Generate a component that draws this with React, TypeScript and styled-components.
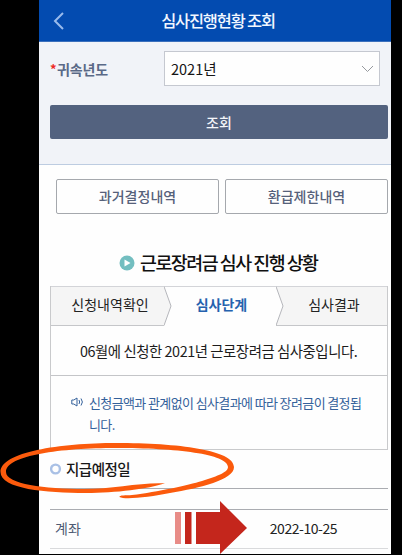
import React from "react";
import styled, { createGlobalStyle, css } from "styled-components";

const GlobalStyle = createGlobalStyle`
  * { box-sizing: border-box; }
  body {
    margin: 0;
    background: #000;
    overflow: hidden;
    font-family: "Noto Sans CJK KR", "Noto Sans", sans-serif;
  }
  button { font-family: inherit; padding: 0; margin: 0; }
`;

const Stage = styled.div`
  position: relative;
  width: 402px;
  height: 555px;
  padding-left: 39px;
  background: #000;
`;

const Phone = styled.main`
  width: 352px;
  height: 554px;
  overflow: hidden;
  background: #fefefe;
`;

const Header = styled.header`
  display: grid;
  grid-template-columns: 40px 1fr 34px;
  align-items: center;
  height: 42px;
  padding-bottom: 2px;
  background: #034bb0;
  border-bottom: 1px solid #3c70bc;
`;

const BackButton = styled.button`
  display: flex;
  padding: 2px 0 0 14px;
  border: 0;
  background: none;
`;

const HeaderTitle = styled.h1`
  margin: 0;
  text-align: center;
  color: #f2f7ff;
  font-size: 16.4px;
  font-weight: 500;
  line-height: 24px;
  letter-spacing: -1.2px;
`;

const SearchForm = styled.section`
  height: 123px;
  padding: 9px 3px 0 11px;
  background: #f1f3f8;
  border-bottom: 1px solid #bdcce1;
`;

const Field = styled.div`
  display: flex;
  align-items: center;
  height: 35px;
`;

const Label = styled.label`
  width: 114px;
  display: flex;
  gap: 2px;
  color: #5a6987;
  font-size: 14px;
  font-weight: 700;
  line-height: 20px;
  letter-spacing: -0.1px;
`;

const Required = styled.span`
  width: 5px;
  color: #ee2a24;
  font-size: 13px;
`;

const Select = styled.div`
  display: flex;
  align-items: center;
  justify-content: space-between;
  width: 216px;
  height: 35px;
  padding: 0 5px 0 6px;
  border: 1px solid #c5c8d0;
  background: #fefefe;
  color: #151515;
  font-size: 14.5px;
  line-height: 20px;
`;

const SubmitButton = styled.button`
  display: block;
  width: 338px;
  height: 34px;
  margin-top: 19px;
  border: 0;
  border-radius: 2px;
  background: #53627f;
  color: #f4f6fa;
  font-size: 14px;
  font-weight: 500;
`;

const HistoryButtons = styled.div`
  display: grid;
  grid-template-columns: 1fr 1fr;
  gap: 6px;
  padding: 14px 3px 0 17px;
`;

const OutlineButton = styled.button`
  height: 35px;
  padding-bottom: 1px;
  border: 1px solid #a5a8ad;
  border-radius: 2px;
  background: #fefefe;
  color: #56617a;
  font-size: 14px;
  font-weight: 500;
`;

const SectionTitle = styled.h2`
  display: flex;
  align-items: center;
  gap: 5px;
  height: 27px;
  margin: 35px 0 0 80px;
  color: #101010;
  font-size: 18.4px;
  font-weight: 500;
  letter-spacing: -1.5px;
  line-height: 24px;
  white-space: nowrap;
  svg { letter-spacing: 0; }
`;

const TitleText = styled.span`
  position: relative;
  padding-bottom: 2px;
`;

const Progress = styled.section`
  width: 338px;
  height: 164px;
  margin: 10px 0 0 11px;
  border: 1px solid #c9cacc;
  border-top: 0;
`;

const Steps = styled.div`
  display: grid;
  grid-template-columns: 113px 112px 111px;
  height: 40px;
  border-top: 1px solid #d3d4d8;
`;

const Step = styled.div<{ $active?: boolean }>`
  display: flex;
  position: relative;
  align-items: center;
  justify-content: center;
  padding-bottom: 4px;
  border-bottom: 1px solid #c5c6c9;
  background: #f5f5f5;
  color: #222;
  font-size: 14px;
  line-height: 20px;
  &:first-child { padding-left: 5px; }
  &:last-child { padding-left: 5px; }
  ${({ $active }) =>
    $active &&
    css`
      border-bottom-color: transparent;
      background: #fefefe;
      color: #2562ae;
      font-weight: 700;
      padding-left: 3px;
    `}
`;

const StepArrow = styled.svg`
  position: absolute;
  z-index: 1;
  top: -1px;
  left: 100%;
`;

const Status = styled.p`
  height: 50px;
  margin: 0;
  padding-left: 29px;
  border-bottom: 1px solid #c4c5c8;
  color: #1c1c1c;
  font-size: 14.4px;
  line-height: 50px;
  letter-spacing: -0.45px;
  white-space: nowrap;
`;

const Notice = styled.div`
  display: flex;
  gap: 5px;
  padding: 16px 0 0 20px;
  color: #34619b;
  font-size: 13px;
  line-height: 21.5px;
  letter-spacing: -0.62px;
  white-space: nowrap;
  svg { margin-top: 4px; }
`;

const PaymentHeading = styled.h3`
  display: flex;
  align-items: center;
  gap: 4px;
  height: 39px;
  width: 338px;
  margin: 0 0 0 11px;
  padding-bottom: 1px;
  border-bottom: 1px solid #aaacb1;
  color: #171717;
  font-size: 14.5px;
  font-weight: 500;
  letter-spacing: -0.5px;
`;

const PaymentRow = styled.div`
  display: flex;
  align-items: center;
  width: 338px;
  height: 40px;
  margin: 20px 0 0 11px;
  padding: 0 0 2px 5px;
  border-top: 1px solid #aaacb1;
  border-bottom: 1px solid #d9dadc;
  color: #4f5b74;
  font-size: 14px;
`;

const PaymentDate = styled.time`
  margin-left: 189px;
  color: #222;
  letter-spacing: -0.45px;
`;

const Annotation = styled.svg`
  position: absolute;
  top: 0;
  left: 0;
  pointer-events: none;
`;

const StepSeparator = ({ fill }: { fill: string }) => (
  <StepArrow width="8" height="41" viewBox="0 0 8 41">
    <path d="M0 1L7 20L0 39.5Z" fill={fill} />
    <path d="M0 0.5L7 20L0 39.5" fill="none" stroke="#b5b6bb" />
  </StepArrow>
);

export default function App() {
  return (
    <>
      <GlobalStyle />
      <Stage>
        <Phone>
          <Header>
            <BackButton aria-label="이전">
              <svg width="12" height="18" viewBox="0 0 12 18">
                <path d="M10 1L2 9L10 17" fill="none" stroke="#99bbec" strokeWidth="2" />
              </svg>
            </BackButton>
            <HeaderTitle>심사진행현황 조회</HeaderTitle>
          </Header>
          <SearchForm>
            <Field>
              <Label><Required>*</Required>귀속년도</Label>
              <Select>
                2021년
                <svg width="13" height="8" viewBox="0 0 13 8">
                  <path d="M1 1L6.5 6.5L12 1" fill="none" stroke="#96999e" />
                </svg>
              </Select>
            </Field>
            <SubmitButton>조회</SubmitButton>
          </SearchForm>
          <HistoryButtons>
            <OutlineButton>과거결정내역</OutlineButton>
            <OutlineButton>환급제한내역</OutlineButton>
          </HistoryButtons>
          <SectionTitle>
            <svg width="16" height="16" viewBox="0 0 16 16">
              <circle cx="8" cy="8" r="7.5" fill="#73bec0" />
              <path d="M5.5 4.5L11.5 8L5.5 11.5Z" fill="#fff" />
            </svg>
            <TitleText>근로장려금 심사 진행 상황</TitleText>
          </SectionTitle>
          <Progress>
            <Steps>
              <Step>신청내역확인<StepSeparator fill="#f5f5f5" /></Step>
              <Step $active>심사단계<StepSeparator fill="#fefefe" /></Step>
              <Step>심사결과</Step>
            </Steps>
            <Status>06월에 신청한 2021년 근로장려금 심사중입니다.</Status>
            <Notice>
              <svg width="13" height="12" viewBox="0 0 13 12" fill="none" stroke="#34619b">
                <path d="M0.8 4H2.8L6 2V10L2.8 8H0.8Z" />
                <path d="M8 4Q9.3 6 8 8M10 2.5Q12.8 6 10 9.5" />
              </svg>
              <span>신청금액과 관계없이 심사결과에 따라 장려금이 결정됩<br />니다.</span>
            </Notice>
          </Progress>
          <PaymentHeading>
            <svg width="12" height="12" viewBox="0 0 12 12">
              <circle cx="5.5" cy="6" r="4.4" fill="none" stroke="#a9c0e5" strokeWidth="2.4" />
            </svg>
            지급예정일
          </PaymentHeading>
          <PaymentRow>
            계좌
            <PaymentDate>2022-10-25</PaymentDate>
          </PaymentRow>
        </Phone>
        <Annotation width="402" height="555" viewBox="0 0 402 555">
          <path
            fill="#fb5a0c"
            d="M165 483.3C148 489 116 493 86 493C46 493 0.5 489 0.5 472C0.5 452 60 443 116 443C178 443 234 450 234 467C234 480 200 488 170 493C150 497 125 500 119.5 497C119 495 126 495.500 132 495C158 492 188 485 202 481C214 477 228 473 228 467C228 454 176 448 116 448C62 448 6 455 6 472C6 484 45 489 84 489C112 489 142 482 165 483.3Z"
          />
          <path d="M175 512H181V544H175Z" fill="#e88c87" />
          <path d="M185 512H191.500V544H185ZM196 512H220V501L247 528L220 554V544H196Z" fill="#c4261c" />
        </Annotation>
      </Stage>
    </>
  );
}
